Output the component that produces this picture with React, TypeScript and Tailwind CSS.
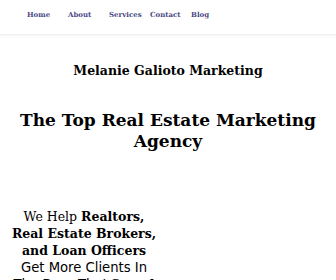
const navItems = ["Home", "About", "Services", "Contact", "Blog"];

export default function App() {
  return (
    <div className="min-h-screen w-full overflow-hidden bg-white text-black">
      {/* Nav */}
      <nav className="border-b border-[#f0f0f0] shadow-[0_2px_3px_rgba(0,0,0,0.03)]">
        <ul className="flex h-[34px] items-start pl-[27px] pt-[10px]">
          {navItems.map((item) => (
            <li
              key={item}
              className="w-[41px] font-['DejaVu_Serif',serif] text-[7px] font-bold text-[#4a4a86]"
            >
              {item}
            </li>
          ))}
        </ul>
      </nav>

      {/* Hero */}
      <section className="pt-[28px] text-center font-['DejaVu_Serif',serif] font-bold">
        <h2 className="text-[12.5px] leading-[16px]">Melanie Galioto Marketing</h2>
        <h1 className="mx-auto mt-[31px] max-w-[320px] text-[17px] leading-[21px]">
          The Top Real Estate Marketing Agency
        </h1>
      </section>

      {/* Pitch */}
      <section className="mt-[56px] grid grid-cols-2">
        <p className="text-center text-[12.5px] leading-[17px]">
          <span className="font-['DejaVu_Serif',serif]">We Help </span>
          <b className="font-['DejaVu_Serif',serif]">
            Realtors,
            <br />
            Real Estate Brokers,
            <br />
            and Loan Officers
          </b>
          <br />
          <span className="font-['DejaVu_Sans',sans-serif] text-[13.2px]">
            Get More Clients In
            <br />
            The Door That
          </span>{" "}
          <b className="font-['DejaVu_Serif',serif]">Spend</b>
          <br />
          <b className="font-['DejaVu_Serif',serif]">More</b>
        </p>
        <div />
      </section>
    </div>
  );
}
